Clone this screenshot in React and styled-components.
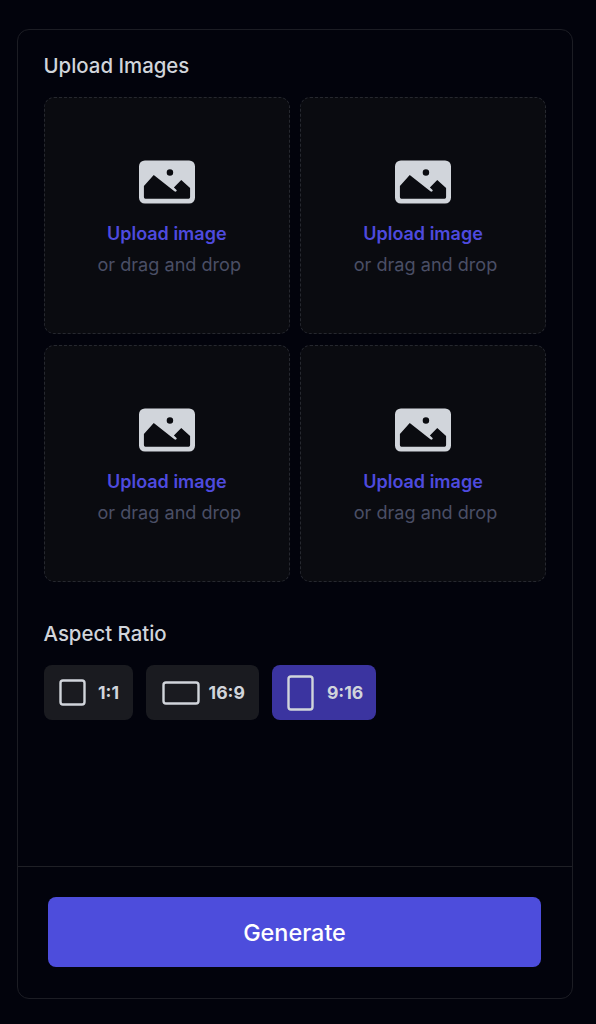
import React from "react";
import styled, { createGlobalStyle } from "styled-components";

const GlobalStyle = createGlobalStyle`
  html, body {
    margin: 0;
    padding: 0;
    background: #02030c;
    font-family: Inter, "Liberation Sans", sans-serif;
  }
  * {
    box-sizing: border-box;
  }
`;

const Page = styled.div`
  width: 596px;
  height: 1024px;
  padding: 29px 23px 25px 17px;
  overflow: hidden;
`;

const Panel = styled.div`
  display: flex;
  flex-direction: column;
  width: 556px;
  height: 970px;
  border: 1px solid #1c1d24;
  border-radius: 12px;
`;

const Main = styled.div`
  flex: 1;
  padding: 22px 26px 0 25.5px;
`;

const Title = styled.div`
  font-size: 20.4px;
  line-height: 28px;
  font-weight: 500;
  color: #d1d5db;
`;

const UploadGrid = styled.div`
  display: grid;
  grid-template-columns: 246.5px 246px;
  grid-auto-rows: 236.5px;
  column-gap: 10px;
  row-gap: 11.5px;
  margin-top: 17px;
`;

const Tile = styled.div`
  display: flex;
  flex-direction: column;
  align-items: center;
  border: 1px dashed #26282f;
  border-radius: 10px;
  background: #0a0b10;
  padding-top: 62px;
`;

const UploadLabel = styled.div`
  margin-top: 16px;
  font-size: 18px;
  line-height: 28px;
  font-weight: 600;
  color: #4e4ade;
`;

const DropHint = styled.div`
  margin: 2px 0 0 5px;
  font-size: 18.1px;
  line-height: 28px;
  color: #4a4f66;
`;

const RatioSection = styled.div`
  margin-top: 38.5px;
`;

const RatioRow = styled.div`
  display: flex;
  gap: 13px;
  margin-top: 17px;
`;

const RatioButton = styled.div`
  display: flex;
  align-items: center;
  gap: ${({ $gap }) => $gap}px;
  height: 55px;
  padding: 0 ${({ $pr }) => $pr}px 0 ${({ $pl }) => $pl}px;
  border-radius: 8px;
  background: ${({ $active }) => ($active ? "#3b34a0" : "#1a1b20")};
  color: #d1d5db;
  font-size: 17.6px;
  font-weight: 700;
`;

const Footer = styled.div`
  border-top: 1px solid #1f2026;
  padding: 30px 30px;
  height: 132px;
`;

const GenerateButton = styled.div`
  display: flex;
  align-items: center;
  justify-content: center;
  width: 493px;
  height: 70px;
  border-radius: 8px;
  background: #4d4ddc;
  color: #ffffff;
  font-size: 23.4px;
  font-weight: 500;
`;

const ImageIcon = () => (
  <svg width="56" height="44" viewBox="0 0 57 44">
    <path
      fillRule="evenodd"
      fill="#d1d5db"
      d="M6 0H51A6 6 0 0 1 57 6V38A6 6 0 0 1 51 44H6A6 6 0 0 1 0 38V6A6 6 0 0 1 6 0ZM31.5 9a3.3 3.3 0 1 0 0 6.6 3.3 3.3 0 1 0 0-6.6ZM15 15L5 26V37.5Q5 39 6.5 39H50.5Q52 39 52 37.5V28L43 20L35.5 27.5L38.5 30.5Q38 32.5 36 31.5Z"
    />
  </svg>
);

const RatioIcon = ({ w, h }) => (
  <svg width={w + 3} height={h + 3} viewBox={`0 0 ${w + 3} ${h + 3}`}>
    <rect x="1.5" y="1.5" width={w} height={h} rx="2.5" fill="none" stroke="#d1d5db" strokeWidth="2.4" />
  </svg>
);

const ratios = [
  { label: "1:1", w: 24, h: 24, gap: 12, pl: 15.5, pr: 14 },
  { label: "16:9", w: 35, h: 21, gap: 9, pl: 15.5, pr: 14 },
  { label: "9:16", w: 24, h: 33, gap: 12.5, pl: 15.5, pr: 13, active: true },
];

const App = () => (
  <Page>
    <GlobalStyle />
    <Panel>
      <Main>
        <Title>Upload Images</Title>
        <UploadGrid>
          {[0, 1, 2, 3].map((i) => (
            <Tile key={i}>
              <ImageIcon />
              <UploadLabel>Upload image</UploadLabel>
              <DropHint>or drag and drop</DropHint>
            </Tile>
          ))}
        </UploadGrid>
        <RatioSection>
          <Title>Aspect Ratio</Title>
          <RatioRow>
            {ratios.map((r) => (
              <RatioButton key={r.label} $active={r.active} $gap={r.gap} $pl={r.pl} $pr={r.pr}>
                <RatioIcon w={r.w} h={r.h} />
                {r.label}
              </RatioButton>
            ))}
          </RatioRow>
        </RatioSection>
      </Main>
      <Footer>
        <GenerateButton>Generate</GenerateButton>
      </Footer>
    </Panel>
  </Page>
);

export default App;
